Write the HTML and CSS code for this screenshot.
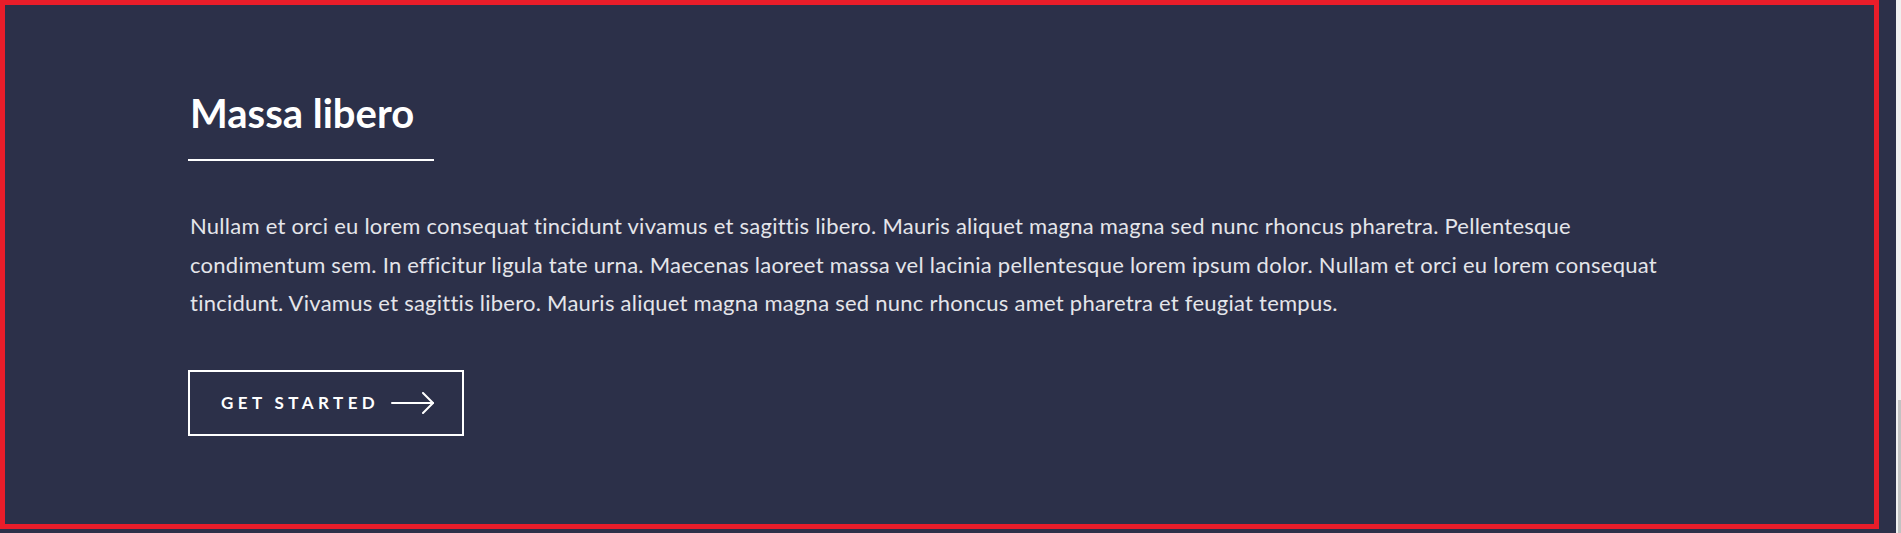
FILE: index.html
```html
<!DOCTYPE html>
<html lang="en">
<head>
<meta charset="utf-8">
<title>Massa libero</title>
<link rel="stylesheet" href="styles.css">
</head>
<body>
<section class="banner">
  <div class="inner">
    <h2 class="title">Massa libero</h2>
    <div class="rule"></div>
    <p class="text">Nullam et orci eu lorem consequat tincidunt vivamus et sagittis libero. Mauris aliquet magna magna sed nunc rhoncus pharetra. Pellentesque condimentum sem. In efficitur ligula tate urna. Maecenas laoreet massa vel lacinia pellentesque lorem ipsum dolor. Nullam et orci eu lorem consequat tincidunt. Vivamus et sagittis libero. Mauris aliquet magna magna sed nunc rhoncus amet pharetra et feugiat tempus.</p>
    <a class="button" href="#">
      <span class="label">Get Started</span>
      <svg class="arrow" width="44" height="22" viewBox="0 0 44 22" fill="none" stroke="#fff" stroke-width="2" stroke-linecap="round" stroke-linejoin="round"><path d="M1 11H42"/><path d="M32 1L42 11L32 21"/></svg>
    </a>
  </div>
</section>
<div class="scrollbar"><div class="thumb"></div></div>
</body>
</html>
```
FILE: styles.css
```css
html, body {
  margin: 0;
  padding: 0;
}
body {
  background: #2c3049;
  color: #e4e5ea;
  font-family: Lato, "Open Sans", sans-serif;
  font-variant-ligatures: none;
  height: 533px;
  overflow: hidden;
}
.banner {
  box-sizing: border-box;
  width: 1879px;
  height: 529px;
  border: 5px solid #e91d2a;
}
.inner {
  padding: 78px 0 0 185px;
  width: 1510px;
}
.title {
  margin: 0;
  font-size: 40px;
  font-weight: 700;
  line-height: 1.5;
  color: #ffffff;
}
.rule {
  width: 246px;
  height: 2px;
  background: #ffffff;
  margin: 16px 0 0 -2px;
}
.text {
  margin: 46px 0 0 0;
  font-size: 22px;
  font-weight: 400;
  letter-spacing: 0.25px;
  line-height: 38.6px;
}
.button {
  display: inline-flex;
  align-items: center;
  gap: 12px;
  box-sizing: border-box;
  height: 66px;
  margin: 47px 0 0 -2px;
  padding: 0 27px 0 31px;
  border: 2px solid #ffffff;
  color: #ffffff;
  text-decoration: none;
}
.label {
  font-size: 17px;
  font-weight: 700;
  letter-spacing: 0.26em;
  text-transform: uppercase;
}
.scrollbar {
  position: fixed;
  top: 0;
  right: 0;
  width: 5px;
  height: 533px;
  background: #f0f0f0;
}
.thumb {
  position: absolute;
  right: 0;
  bottom: 0;
  width: 3px;
  height: 133px;
  background: #c2c2c2;
}
```
